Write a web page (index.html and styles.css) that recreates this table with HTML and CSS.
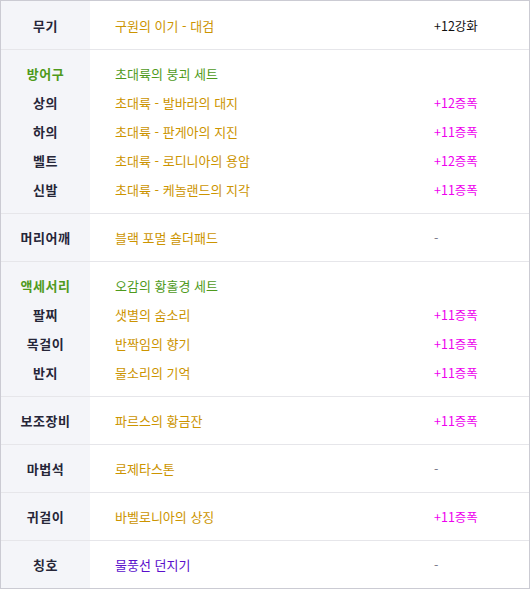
FILE: index.html
```html
<!DOCTYPE html>
<html lang="ko">
<head>
<meta charset="utf-8">
<link rel="stylesheet" href="styles.css">
</head>
<body>
<div class="table">
  <div class="section first">
    <div class="labels"><div class="line">무기</div></div>
    <div class="values">
      <div class="line"><span class="name gold">구원의 이기 - 대검</span><span class="opt black">+12강화</span></div>
    </div>
  </div>
  <div class="section">
    <div class="labels">
      <div class="line green">방어구</div>
      <div class="line">상의</div>
      <div class="line">하의</div>
      <div class="line">벨트</div>
      <div class="line">신발</div>
    </div>
    <div class="values">
      <div class="line"><span class="name green">초대륙의 붕괴 세트</span></div>
      <div class="line"><span class="name gold">초대륙 - 발바라의 대지</span><span class="opt pink">+12증폭</span></div>
      <div class="line"><span class="name gold">초대륙 - 판게아의 지진</span><span class="opt pink">+11증폭</span></div>
      <div class="line"><span class="name gold">초대륙 - 로디니아의 용암</span><span class="opt pink">+12증폭</span></div>
      <div class="line"><span class="name gold">초대륙 - 케놀랜드의 지각</span><span class="opt pink">+11증폭</span></div>
    </div>
  </div>
  <div class="section">
    <div class="labels"><div class="line">머리어깨</div></div>
    <div class="values">
      <div class="line"><span class="name gold">블랙 포멀 숄더패드</span><span class="opt gray">-</span></div>
    </div>
  </div>
  <div class="section">
    <div class="labels">
      <div class="line green">액세서리</div>
      <div class="line">팔찌</div>
      <div class="line">목걸이</div>
      <div class="line">반지</div>
    </div>
    <div class="values">
      <div class="line"><span class="name green">오감의 황홀경 세트</span></div>
      <div class="line"><span class="name gold">샛별의 숨소리</span><span class="opt pink">+11증폭</span></div>
      <div class="line"><span class="name gold">반짝임의 향기</span><span class="opt pink">+11증폭</span></div>
      <div class="line"><span class="name gold">물소리의 기억</span><span class="opt pink">+11증폭</span></div>
    </div>
  </div>
  <div class="section">
    <div class="labels"><div class="line">보조장비</div></div>
    <div class="values">
      <div class="line"><span class="name gold">파르스의 황금잔</span><span class="opt pink">+11증폭</span></div>
    </div>
  </div>
  <div class="section">
    <div class="labels"><div class="line">마법석</div></div>
    <div class="values">
      <div class="line"><span class="name gold">로제타스톤</span><span class="opt gray">-</span></div>
    </div>
  </div>
  <div class="section">
    <div class="labels"><div class="line">귀걸이</div></div>
    <div class="values">
      <div class="line"><span class="name gold">바벨로니아의 상징</span><span class="opt pink">+11증폭</span></div>
    </div>
  </div>
  <div class="section">
    <div class="labels"><div class="line">칭호</div></div>
    <div class="values">
      <div class="line"><span class="name purple">물풍선 던지기</span><span class="opt gray">-</span></div>
    </div>
  </div>
</div>
</body>
</html>
```

FILE: styles.css
```css
html, body {
  margin: 0;
  padding: 0;
  background: #ffffff;
}
body {
  font-family: "Noto Sans CJK KR", "Noto Sans", sans-serif;
  font-size: 13px;
}
.table {
  width: 530px;
  box-sizing: border-box;
  border: 1px solid #cbcbd3;
  background: #ffffff;
}
.section {
  display: flex;
  border-top: 1px solid #e6e6ea;
}
.section.first {
  border-top: none;
}
.labels {
  width: 89px;
  flex: none;
  background: #f4f5f9;
  padding: 9px 0;
  font-weight: bold;
  color: #262638;
  text-align: center;
  letter-spacing: 0.5px;
}
.section.first .labels,
.section.first .values {
  padding-top: 10px;
}
.values {
  flex: 1;
  padding: 9px 0 9px 25px;
}
.line {
  height: 29px;
  line-height: 29px;
  white-space: nowrap;
}
.values .line {
  display: flex;
}
.name {
  width: 319px;
  flex: none;
}
.opt {
  flex: none;
  font-size: 12.5px;
}
.gold { color: #cc9400; }
.green { color: #4f9a1c; }
.labels .green { color: #4f9a1c; }
.pink { color: #ee00ee; }
.black { color: #111111; }
.gray { color: #77778a; }
.purple { color: #5a0fcc; }
```
